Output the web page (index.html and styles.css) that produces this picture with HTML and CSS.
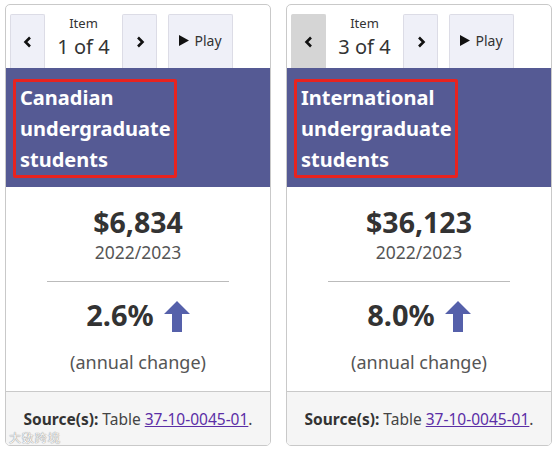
FILE: index.html
```html
<!DOCTYPE html>
<html lang="en">
<head>
<meta charset="utf-8">
<title>Tuition cards</title>
<link rel="stylesheet" href="styles.css">
</head>
<body>
<div class="row">
  <section class="card">
    <div class="toolbar">
      <button class="btn nav"><svg width="10" height="12" viewBox="0 0 10 12"><path d="M7 1.5 L2.5 6 L7 10.5" fill="none" stroke="#111" stroke-width="2.6"/></svg></button>
      <div class="counter"><span class="lbl">Item</span><span class="num">1 of 4</span></div>
      <button class="btn nav"><svg width="10" height="12" viewBox="0 0 10 12"><path d="M3 1.5 L7.5 6 L3 10.5" fill="none" stroke="#111" stroke-width="2.6"/></svg></button>
      <button class="btn play"><svg width="10" height="11" viewBox="0 0 10 11"><path d="M0 0 L10 5.5 L0 11Z" fill="#111"/></svg>Play</button>
    </div>
    <div class="banner"><h2 class="title">Canadian undergraduate students</h2></div>
    <div class="body">
      <div class="value">$6,834</div>
      <div class="period">2022/2023</div>
      <hr class="rule">
      <div class="change">2.6% <svg class="arrow" width="26" height="31" viewBox="0 0 26 31"><path d="M13 0 L26 13 L18 13 L18 31 L8 31 L8 13 L0 13Z" fill="#5560aa"/></svg></div>
      <div class="note">(annual change)</div>
    </div>
    <div class="source"><b>Source(s):</b> Table <a href="#">37-10-0045-01</a>.</div>
    <div class="mark">大数跨境</div>
  </section>
  <section class="card">
    <div class="toolbar">
      <button class="btn nav active"><svg width="10" height="12" viewBox="0 0 10 12"><path d="M7 1.5 L2.5 6 L7 10.5" fill="none" stroke="#111" stroke-width="2.6"/></svg></button>
      <div class="counter"><span class="lbl">Item</span><span class="num">3 of 4</span></div>
      <button class="btn nav"><svg width="10" height="12" viewBox="0 0 10 12"><path d="M3 1.5 L7.5 6 L3 10.5" fill="none" stroke="#111" stroke-width="2.6"/></svg></button>
      <button class="btn play"><svg width="10" height="11" viewBox="0 0 10 11"><path d="M0 0 L10 5.5 L0 11Z" fill="#111"/></svg>Play</button>
    </div>
    <div class="banner"><h2 class="title">International undergraduate students</h2></div>
    <div class="body">
      <div class="value">$36,123</div>
      <div class="period">2022/2023</div>
      <hr class="rule">
      <div class="change">8.0% <svg class="arrow" width="26" height="31" viewBox="0 0 26 31"><path d="M13 0 L26 13 L18 13 L18 31 L8 31 L8 13 L0 13Z" fill="#5560aa"/></svg></div>
      <div class="note">(annual change)</div>
    </div>
    <div class="source"><b>Source(s):</b> Table <a href="#">37-10-0045-01</a>.</div>
  </section>
</div>
</body>
</html>
```
FILE: styles.css
```css
html, body { margin: 0; padding: 0; background: #fff; }
body { font-family: "Noto Sans", "Open Sans", sans-serif; color: #333; }
.row { display: flex; gap: 15px; padding: 4px 0 0 5px; }
.card {
  position: relative;
  width: 266px; height: 442px;
  border: 1px solid #c9c9c9; border-radius: 5px;
  display: flex; flex-direction: column;
  box-sizing: border-box;
  overflow: hidden;
  background: #fff;
}
.toolbar { display: flex; align-items: stretch; padding: 9px 0 0 4px; height: 54px; box-sizing: content-box; }
.btn {
  border: 1px solid #dcdce6; border-bottom: none;
  background: #eff0f8;
  font-family: inherit; color: #222;
  display: flex; align-items: center; justify-content: center;
  padding: 0; margin: 0;
  border-radius: 2px 2px 0 0;
}
.nav { width: 35px; }
.nav.active { background: #d5d5d5; border-color: #d5d5d5; }
.counter { width: 77px; display: flex; flex-direction: column; align-items: center; justify-content: flex-start; padding-top: 2px; box-sizing: border-box; }
.lbl { font-size: 13px; line-height: 14px; color: #333; }
.num { font-size: 20px; line-height: 22px; margin-top: 6px; color: #333; }
.play { width: 65px; margin-left: 11px; font-size: 14px; gap: 5px; color: #333; padding-bottom: 2px; }
.banner { background: #555a94; height: 119px; padding: 11px 0 0 7px; box-sizing: border-box; }
.title {
  margin: 0; width: 154px;
  border: 3px solid #e8231f; border-radius: 2px;
  padding: 0 0 0 4px;
  color: #fff; font-size: 20px; font-weight: 700; line-height: 31px;
}
.body { flex: 1; display: flex; flex-direction: column; align-items: center; }
.value { margin-top: 17px; font-size: 28.5px; font-weight: 700; line-height: 36px; color: #333; }
.period { margin-top: 0; font-size: 17.5px; line-height: 24px; color: #555; }
.rule { width: 182px; border: 0; border-top: 1px solid #bbb; margin: 17px 0 0 0; }
.change { margin-top: 15px; display: flex; align-items: center; gap: 10px; font-size: 29px; font-weight: 700; line-height: 36px; color: #333; }
.arrow { margin-top: 2px; }
.note { margin-top: 17px; font-size: 18px; line-height: 24px; color: #555; }
.source {
  height: 54px; box-sizing: border-box;
  border-top: 1px solid #c9c9c9; background: #f5f5f5;
  display: flex; align-items: center; justify-content: center;
  font-size: 15.5px; color: #444; white-space: pre;
}
.source b { color: #333; }
.source a { color: #5b2ea6; text-decoration: underline; }
.mark {
  position: absolute; left: 3px; bottom: 1px;
  font-size: 12px; line-height: 12px; color: #fff; letter-spacing: 1px;
  text-shadow: 0 0 1px #888, 0 0 1px #888;
}
```
